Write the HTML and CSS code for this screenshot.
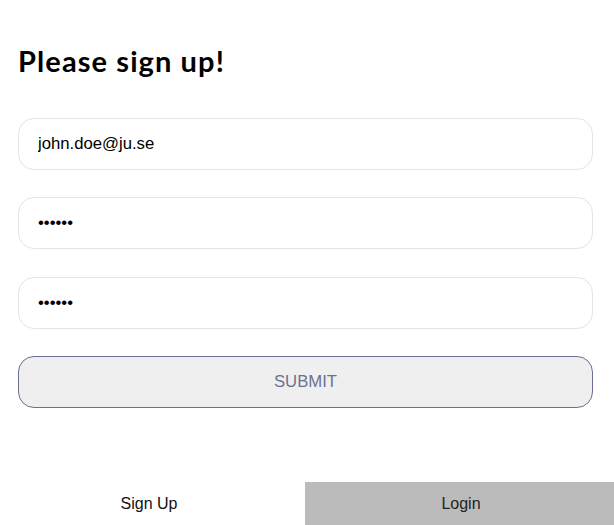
FILE: index.html
```html
<!DOCTYPE html>
<html>
<head>
<meta charset="utf-8">
<link rel="stylesheet" href="styles.css">
</head>
<body>
<div class="page">
  <main class="content">
    <h1 class="title">Please sign up!</h1>
    <form class="form">
      <input class="field" type="email" value="john.doe@ju.se">
      <input class="field" type="password" value="secret">
      <input class="field field-last" type="password" value="secret">
      <button class="submit" type="button">SUBMIT</button>
    </form>
  </main>
  <nav class="tabs">
    <div class="tab tab-active">Sign Up</div>
    <div class="tab tab-inactive">Login</div>
  </nav>
</div>
</body>
</html>
```
FILE: styles.css
```css
html, body {
  margin: 0;
  padding: 0;
  height: 100%;
  background: #fff;
}
.page {
  height: 525px;
  display: flex;
  flex-direction: column;
  font-family: "Liberation Sans", Arial, sans-serif;
}
.content {
  flex: 1;
  padding: 0 21px 0 18px;
}
.title {
  margin: 0 0 39px 0;
  padding-top: 43px;
  font-family: Lato, sans-serif;
  font-weight: bold;
  font-size: 29px;
  letter-spacing: 1.1px;
  color: #000;
  line-height: 36px;
}
.form {
  display: flex;
  flex-direction: column;
  gap: 27px;
}
.field {
  height: 52px;
  box-sizing: border-box;
  border: 1px solid #e4e4e4;
  border-radius: 16px;
  padding: 0 19px;
  font-family: "Liberation Sans", Arial, sans-serif;
  font-size: 16.7px;
  color: #000;
  background: #fff;
  outline: none;
}
.field-last {
  margin-top: 1px;
}
.submit {
  height: 52px;
  box-sizing: border-box;
  border: 1px solid #6a6f95;
  border-radius: 16px;
  background: #efefef;
  color: #6b7290;
  font-family: "Liberation Sans", Arial, sans-serif;
  font-size: 16.7px;
}
.tabs {
  display: flex;
  height: 43px;
}
.tab {
  display: flex;
  align-items: center;
  justify-content: center;
  font-size: 16px;
  color: #111;
}
.tab-active {
  width: 305px;
  box-sizing: border-box;
  padding-right: 7px;
  background: #fff;
}
.tab-inactive {
  flex: 1;
  padding-left: 3px;
  background: #bbbbbb;
  color: #222;
}
```
